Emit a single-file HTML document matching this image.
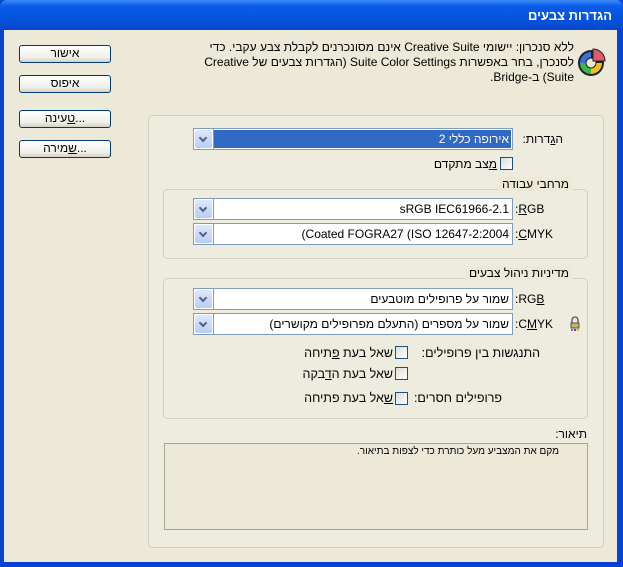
<!DOCTYPE html>
<html><head><meta charset="utf-8"><style>
*{margin:0;padding:0;box-sizing:border-box}
body{width:623px;height:567px;background:#0842d0;position:relative;overflow:hidden;font-family:"Liberation Sans","DejaVu Sans",sans-serif;font-size:12px;color:#000}
.a{position:absolute}
.t{position:absolute;direction:rtl;white-space:nowrap;line-height:14px}
.f{position:absolute;display:flex;direction:ltr;white-space:nowrap;line-height:14px}
.f span{display:block;white-space:pre}
#title{left:0;top:0;width:623px;height:30px;background:linear-gradient(#3d8cf7,#0a5de8 20%,#0554e0 60%,#0847c8);border-radius:7px 7px 0 0}
#client{left:4px;top:30px;width:613px;height:532px;background:#ece9d8}
.btn{position:absolute;left:19px;width:92px;height:18px;border:1px solid #003c74;border-radius:3px;background:linear-gradient(#fff,#f0f0ea 70%,#d6d0c5);text-align:center;line-height:15px;font-size:12px}
.panel{position:absolute;border:1px solid #d0d0bf;border-radius:5px}
.combo{position:absolute;left:193px;width:320px;height:22px;background:#fff;border:1px solid #7f9db9}
.combo .dd{position:absolute;left:1px;top:1px;width:17px;height:18px;background:linear-gradient(#dfe8fb,#b8cdf5);border-radius:2px}
.combo .dd:after{content:"";position:absolute;left:5px;top:5px;width:4px;height:4px;border-right:2px solid #4d6185;border-bottom:2px solid #4d6185;transform:rotate(45deg)}
.combo .sep{position:absolute;left:19px;top:0;width:1px;height:20px;background:#7f9db9}
.combo .v{position:absolute;right:3px;top:3px;direction:rtl;white-space:nowrap;line-height:14px}
.combo .f{right:3px;top:3px}
.cb{position:absolute;width:13px;height:13px;border:1px solid #1c5180;background:linear-gradient(135deg,#dcdcd7,#fff)}
.lg{position:absolute;background:#ece9d8;padding:0 4px;direction:rtl;line-height:14px}
</style></head><body>
<div id="title" class="a"></div>
<div class="t" style="right:11px;top:9px;color:#fff;font-weight:bold;font-size:13px">הגדרות צבעים</div>
<div id="client" class="a"></div>

<div class="btn" style="top:45px">אישור</div>
<div class="btn" style="top:75px">איפוס</div>
<div class="btn" style="top:110px"><u>ט</u>עינה...</div>
<div class="btn" style="top:140px"><u>ש</u>מירה...</div>

<svg class="a" style="left:576px;top:47px" width="31" height="31" viewBox="0 0 31 31">
<circle cx="15" cy="16" r="13" fill="#222"/>
<path d="M15 16 L15 5 A11 11 0 0 0 4 16 Z" fill="#3a6fd8"/>
<path d="M15 16 L4 16 A11 11 0 0 0 15 27 Z" fill="#3cb84a"/>
<path d="M15 16 L15 27 A11 11 0 0 0 26 16 Z" fill="#f0c020"/>
<circle cx="15" cy="16" r="5" fill="#ece9d8" stroke="#222"/>
<path d="M17 14 L17 2 A12 12 0 0 1 29 14 Z" fill="#e05a6a" stroke="#222"/>
</svg>
<div class="t" style="right:49px;top:40px">ללא סנכרון: יישומי Creative Suite אינם מסונכרנים לקבלת צבע עקבי. כדי</div>
<div class="t" style="right:49px;top:55px">לסנכרן, בחר באפשרות Suite Color Settings (הגדרות צבעים של Creative</div>
<div class="f" style="right:49px;top:70px"><span>.Bridge-</span><span>ב</span><span> (</span><span>Suite</span></div>

<div class="panel" style="left:148px;top:115px;width:456px;height:433px;background:#eeebdf"></div>

<div class="t" style="right:60px;top:132px">ה<u>ג</u>דרות:</div>
<div class="combo" style="top:128px"><div class="dd"></div><div class="sep"></div>
<div class="a" style="left:20px;top:1px;right:1px;bottom:1px;background:#316ac5"></div>
<div class="v" style="color:#fff">אירופה כללי 2</div></div>
<div class="cb" style="left:500px;top:157px"></div>
<div class="t" style="right:126px;top:157px"><u>מ</u>צב מתקדם</div>

<div class="panel" style="left:163px;top:189px;width:425px;height:70px"></div>
<div class="lg" style="right:50px;top:177px">מרחבי עבודה</div>
<div class="f" style="left:515px;top:202px"><span>:</span><span><u>R</u>GB</span></div>
<div class="combo" style="top:198px"><div class="dd"></div><div class="sep"></div><div class="f"><span>sRGB IEC61966-2.1</span></div></div>
<div class="f" style="left:515px;top:227px"><span>:</span><span><u>C</u>MYK</span></div>
<div class="combo" style="top:223px"><div class="dd"></div><div class="sep"></div><div class="f"><span>(</span><span>Coated FOGRA27 </span><span>(</span><span>ISO 12647-2:2004</span></div></div>

<div class="panel" style="left:163px;top:278px;width:425px;height:141px"></div>
<div class="lg" style="right:50px;top:266px">מדיניות ניהול צבעים</div>
<div class="f" style="left:515px;top:292px"><span>:</span><span>RG<u>B</u></span></div>
<div class="combo" style="top:288px"><div class="dd"></div><div class="sep"></div><div class="v">שמור על פרופילים מוטבעים</div></div>
<div class="f" style="left:515px;top:317px"><span>:</span><span>C<u>M</u>YK</span></div>
<div class="combo" style="top:313px"><div class="dd"></div><div class="sep"></div><div class="v">שמור על מספרים (התעלם מפרופילים מקושרים)</div></div>
<svg class="a" style="left:569px;top:316px" width="12" height="15"><path d="M3 7 V4 A3 3 0 0 1 9 4 V7" fill="none" stroke="#555" stroke-width="1.3"/><rect x="2" y="7" width="8" height="5" fill="#c9b25a" stroke="#555"/><rect x="2" y="13" width="2" height="2" fill="#0aa"/><rect x="5" y="13" width="2" height="2" fill="#c0c"/><rect x="8" y="13" width="2" height="2" fill="#cc0"/></svg>

<div class="cb" style="left:395px;top:346px"></div>
<div class="t" style="right:83px;top:346px;font-size:12.5px">התנגשות בין פרופילים:</div>
<div class="t" style="right:230px;top:346px;font-size:12.5px">שאל בעת <u>פ</u>תיחה</div>
<div class="cb" style="left:395px;top:367px"></div>
<div class="t" style="right:230px;top:367px;font-size:12.5px">שאל בעת ה<u>ד</u>בקה</div>
<div class="cb" style="left:395px;top:392px"></div>
<div class="t" style="right:121px;top:391px;font-size:12.5px">פרופילים חסרים:</div>
<div class="t" style="right:230px;top:391px;font-size:12.5px"><u>ש</u>אל בעת פתיחה</div>

<div class="t" style="right:36px;top:427px">תיאור:</div>
<div class="a" style="left:164px;top:443px;width:424px;height:87px;border:1px solid #a5a597;background:#ece9d8"></div>
<div class="t" style="right:64px;top:445px;font-size:10px">מקם את המצביע מעל כותרת כדי לצפות בתיאור.</div>
</body></html>
